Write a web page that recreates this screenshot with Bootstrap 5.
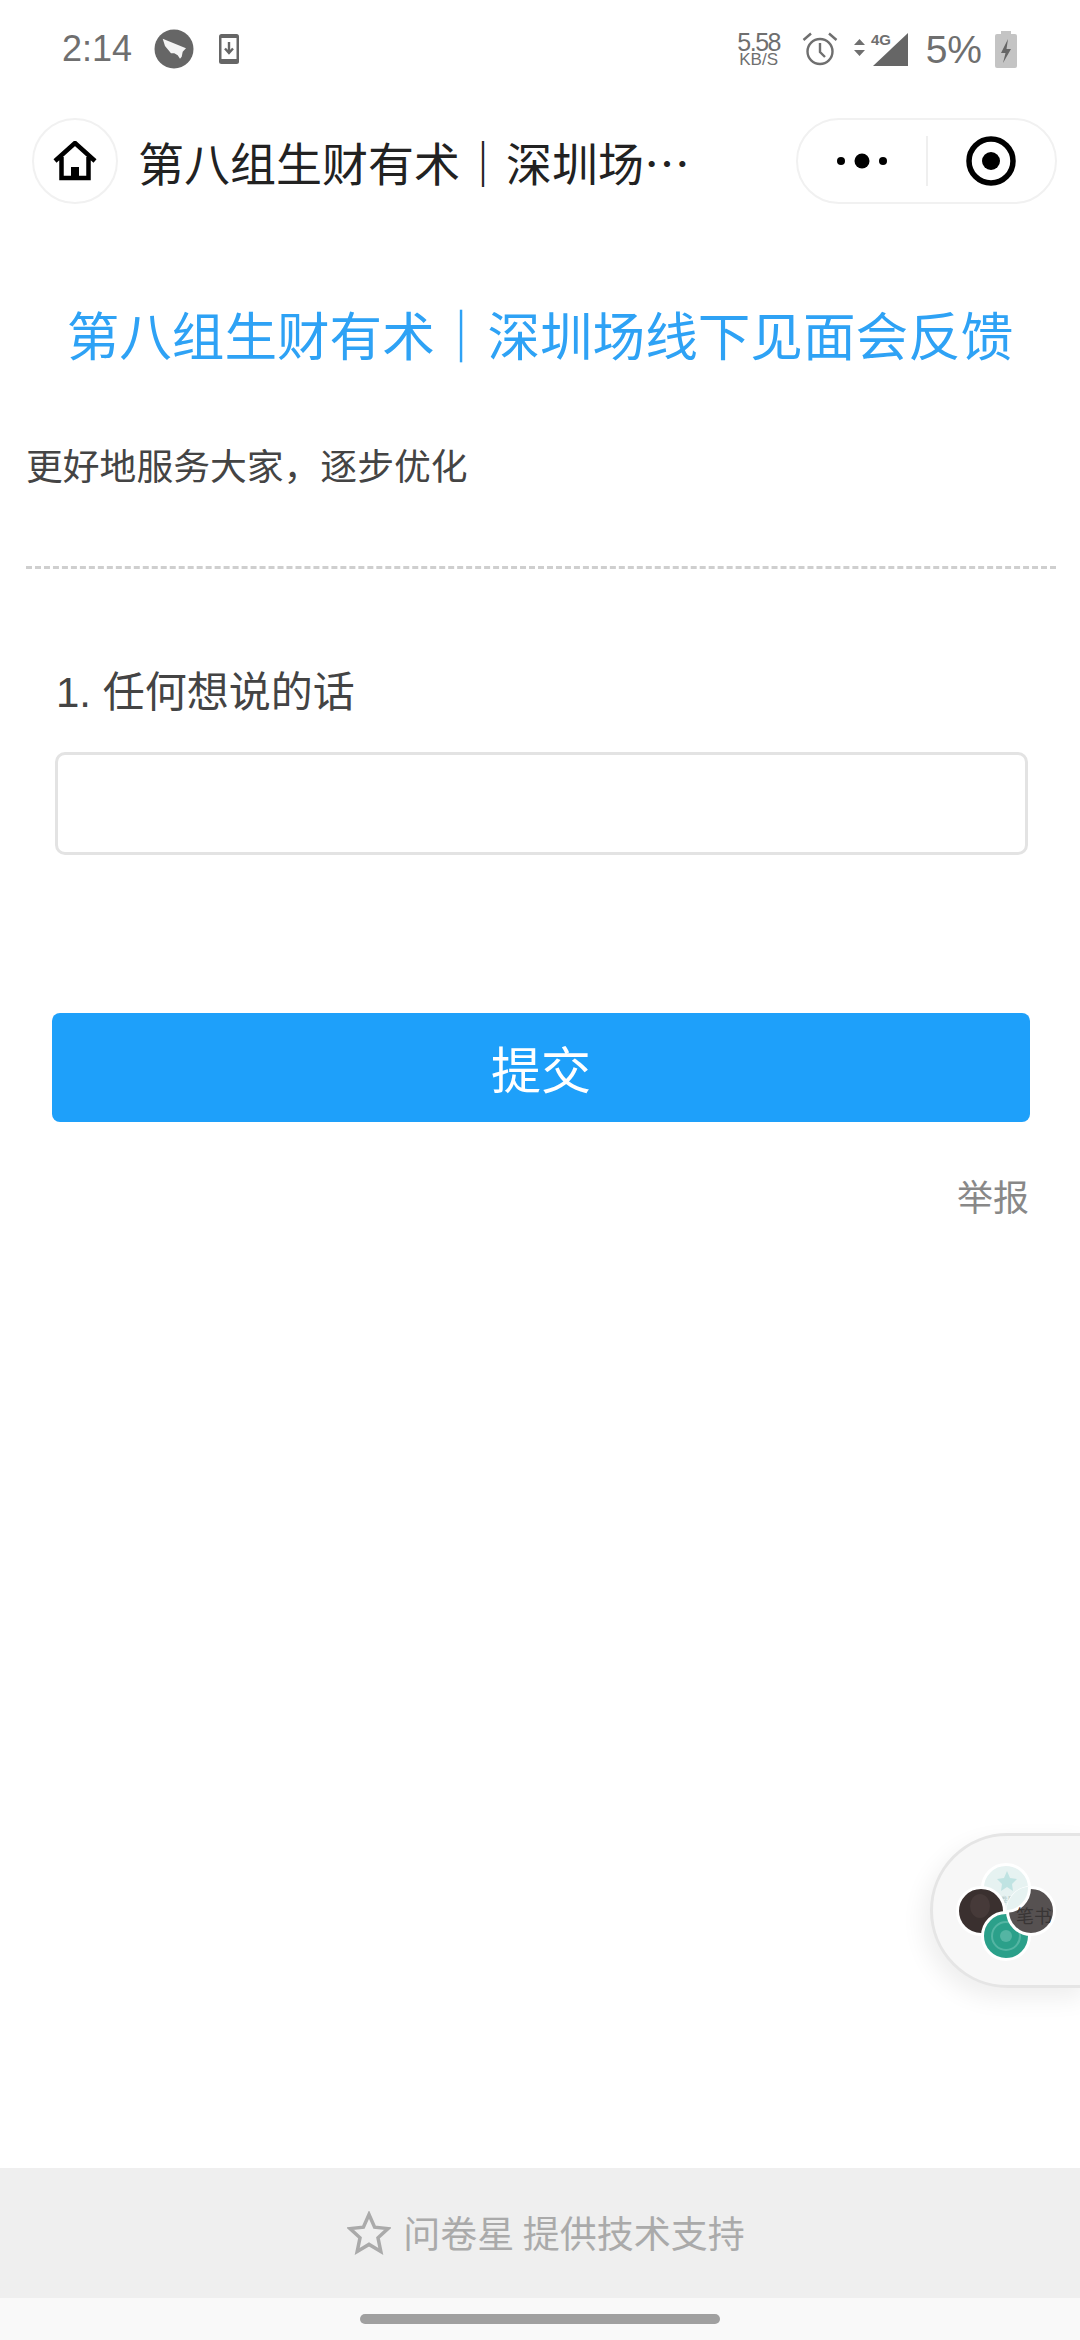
<!DOCTYPE html>
<html lang="zh-CN">
<head>
  <meta charset="UTF-8">
  <title>第八组生财有术｜深圳场线下见面会反馈</title>
  <link href="https://cdn.jsdelivr.net/npm/bootstrap@5.3.0/dist/css/bootstrap.min.css" rel="stylesheet">
  <style>
    html, body { height: 2340px; }
    body { font-family: "Noto Sans CJK SC", "Liberation Sans", sans-serif; overflow: hidden; background: #fff; position: relative; }
    .status-row { height: 98px; padding: 0 63px 0 62px; color: #6f6f6f; font-family: "Liberation Sans", sans-serif; }
    .status-time { font-size: 36px; line-height: 1; margin-right: 22px; }
    .wing-icon { margin-right: 25px; }
    .speed-box { width: 46px; margin-right: 20px; text-align: center; }
    .speed-num { font-size: 25px; line-height: 20px; letter-spacing: -1.5px; }
    .speed-unit { font-size: 17px; line-height: 15px; }
    .signal-icon { margin-left: 16px; }
    .batt-text { font-size: 39px; line-height: 1; margin: 0 13px 0 16px; }
    .nav-row { height: 88px; margin-top: 19px; padding: 0 23px 0 32px; }
    .home-btn { width: 86px; height: 86px; border: 2px solid #f1f1f1; border-radius: 50%; flex: none; }
    .nav-title { margin-left: 20px; font-size: 46px; line-height: 60px; color: #222; white-space: nowrap; }
    .bar-mark { font-weight: 700; }
    .capsule { width: 261px; height: 86px; margin-left: auto; border: 2px solid #f1f1f1; border-radius: 43px; }
    .capsule-side { height: 100%; width: 50%; }
    .capsule-line { width: 2px; height: 50px; background: #efefef; flex: none; }
    .survey-title { margin: 90px 0 0; font-size: 52.6px; line-height: 76px; font-weight: 400; color: #2ea2f5; text-align: center; white-space: nowrap; }
    .survey-desc { margin: 68px 0 0 26px; font-size: 36.8px; line-height: 50px; color: #444; }
    .dash-line { margin: 77px 24px 0 26px; border-top: 3px dashed #cfcfcf; }
    .question-label { margin: 94px 0 0 56px; font-size: 42px; line-height: 60px; color: #444; font-family: "Liberation Sans", "Noto Sans CJK SC", sans-serif; }
    .question-box { display: block; width: 973px; height: 103px; margin: 29px 0 0 55px; border: 3px solid #e3e3e3; border-radius: 10px; box-shadow: none; }
    .submit-btn { display: block; width: 978px; height: 109px; margin: 158px 0 0 52px; padding: 0; font-size: 50px; border: 0; border-radius: 8px; background: #1ea0fa; color: #fff; }
    .report-link { margin: 48px 51px 0 0; font-size: 36px; line-height: 50px; color: #888; text-align: right; }
    .brand-bar { height: 130px; padding-left: 12px; background: #efefef; color: #aaa; font-size: 37px; }
    .brand-star { margin-right: 12px; }
    .gesture-bar { height: 42px; background: #f9f9f9; }
    .gesture-pill { width: 360px; height: 10px; background: #a0a0a0; border-radius: 5px; }
    .float-chip { position: absolute; left: 930px; top: 1833px; width: 160px; height: 155px; background: #f7f7f7; border: 3px solid #e5e5e5; border-radius: 78px 0 0 78px; box-shadow: -6px 10px 24px rgba(0,0,0,.07); }
    .chip-discs { margin-left: 18px; }
  </style>
</head>
<body class="d-flex flex-column">
  <div class="status-row d-flex align-items-center">
    <span class="status-time">2:14</span>
    <svg width="40" height="40" viewBox="0 0 40 40" class="wing-icon">
      <circle cx="20" cy="20" r="19.5" fill="#666"/>
      <path d="M8.7 9.7 L32 19.3 L28.7 22.7 L27.7 27.7 L26 29.7 L23.7 26.3 L20.3 24.3 L17 24.3 L13.7 20.3 L11 17 Z" fill="#f4f4f4"/>
    </svg>
    <svg width="20" height="30" viewBox="0 0 20 30">
      <rect x="0" y="0" width="20" height="30" rx="2.5" fill="#666"/>
      <rect x="2.5" y="4" width="15" height="21" fill="#fff"/>
      <path d="M10 8 V18 M6 14.5 L10 19 L14 14.5" fill="none" stroke="#666" stroke-width="2.4"/>
    </svg>
    <div class="ms-auto d-flex align-items-center">
      <div class="speed-box">
        <div class="speed-num">5.58</div>
        <div class="speed-unit">KB/S</div>
      </div>
      <svg width="36" height="36" viewBox="0 0 36 36">
        <circle cx="18" cy="20.5" r="12.5" fill="none" stroke="#6f6f6f" stroke-width="2.4"/>
        <path d="M18 12 V21 L23 26 M1.5 9 L9 2.5 M34.5 9 L27 2.5" fill="none" stroke="#6f6f6f" stroke-width="2.4"/>
      </svg>
      <svg width="56" height="36" viewBox="0 0 56 36" class="signal-icon">
        <path d="M0 14 L5.5 8 L11 14 Z M0 19 L11 19 L5.5 25 Z" fill="#6f6f6f"/>
        <path d="M19 35 L54 2 V35 Z" fill="#666"/>
        <text x="17" y="14" font-size="15" font-weight="700" fill="#6f6f6f" font-family="Liberation Sans, sans-serif">4G</text>
      </svg>
      <span class="batt-text">5%</span>
      <svg width="22" height="37" viewBox="0 0 22 37">
        <rect x="6" y="0" width="10" height="4" fill="#c4c4c4"/>
        <rect x="0" y="3" width="22" height="34" rx="2" fill="#c4c4c4"/>
        <path d="M13 8 L6 22 H10.5 L8 32 L16 18 H11.5 Z" fill="#666"/>
      </svg>
    </div>
  </div>

  <div class="nav-row d-flex align-items-center">
    <div class="home-btn d-flex align-items-center justify-content-center">
      <svg width="44" height="40" viewBox="0 0 44 40">
        <path d="M2 20 L22 2 L42 20 M8.5 16 V37 H35.5 V16" fill="none" stroke="#000" stroke-width="4.5" stroke-linejoin="miter"/>
        <rect x="18" y="26" width="8" height="11" fill="#000"/>
      </svg>
    </div>
    <div class="nav-title">第八组生财有术<span class="bar-mark">｜</span>深圳场…</div>
    <div class="capsule d-flex align-items-center">
      <div class="capsule-side d-flex align-items-center justify-content-center">
        <svg width="52" height="18" viewBox="0 0 52 18">
          <circle cx="5" cy="9" r="4" fill="#000"/><circle cx="26" cy="9" r="7.5" fill="#000"/><circle cx="47" cy="9" r="4" fill="#000"/>
        </svg>
      </div>
      <div class="capsule-line"></div>
      <div class="capsule-side d-flex align-items-center justify-content-center">
        <svg width="50" height="50" viewBox="0 0 50 50">
          <circle cx="25" cy="25" r="22" fill="none" stroke="#000" stroke-width="5.5"/><circle cx="25" cy="25" r="9" fill="#000"/>
        </svg>
      </div>
    </div>
  </div>

  <h1 class="survey-title">第八组生财有术<span class="bar-mark">｜</span>深圳场线下见面会反馈</h1>
  <p class="survey-desc">更好地服务大家，逐步优化</p>
  <div class="dash-line"></div>

  <div class="question-label">1. 任何想说的话</div>
  <input type="text" class="form-control question-box" aria-label="任何想说的话">
  <button type="button" class="btn submit-btn">提交</button>
  <div class="report-link">举报</div>

  <div class="brand-bar mt-auto d-flex align-items-center justify-content-center">
    <svg width="44" height="44" viewBox="0 0 44 44" class="brand-star">
      <path d="M22 3.5 L27.6 16.2 L41 17.6 L31 26.8 L33.8 40.4 L22 33.4 L10.2 40.4 L13 26.8 L3 17.6 L16.4 16.2 Z" fill="none" stroke="#aaa" stroke-width="3.5"/>
    </svg>
    <span>问卷星 提供技术支持</span>
  </div>
  <div class="gesture-bar d-flex align-items-center justify-content-center">
    <div class="gesture-pill"></div>
  </div>

  <!-- pinwheel of avatars: top over right, right over bottom, bottom over left, left over top -->
  <div class="float-chip d-flex align-items-center">
    <svg width="110" height="110" viewBox="0 0 110 110" class="chip-discs">
      <defs>
        <clipPath id="rightDisc"><circle cx="80" cy="55" r="24.5"/></clipPath>
      </defs>
      <g id="topDisc">
        <circle cx="55" cy="32" r="23.5" fill="#e6f2f1" stroke="#fff" stroke-width="3"/>
        <path d="M56 15 L59 22 L66 23 L61 28 L62 35 L56 31 L50 35 L51 28 L46 23 L53 22 Z" fill="#bfe3e2"/>
      </g>
      <text x="53" y="46" font-size="7" text-anchor="middle" fill="#b5c9c8">问卷星</text>
      <circle cx="30" cy="55" r="23.5" fill="#3a302f" stroke="#fff" stroke-width="3"/>
      <ellipse cx="29" cy="50" rx="10" ry="12" fill="#463a39"/>
      <circle cx="55" cy="80" r="23.5" fill="#2ba08a" stroke="#fff" stroke-width="3"/>
      <circle cx="55" cy="80" r="14" fill="none" stroke="#54b5a3" stroke-width="2"/>
      <circle cx="55" cy="80" r="6" fill="#54b5a3"/>
      <circle cx="80" cy="55" r="23.5" fill="#565151" stroke="#fff" stroke-width="3"/>
      <use href="#topDisc" clip-path="url(#rightDisc)"/>
      <text x="83" y="67" font-size="18" text-anchor="middle" fill="#393535">笔书</text>
    </svg>
  </div>

  <script src="https://cdn.jsdelivr.net/npm/bootstrap@5.3.0/dist/js/bootstrap.bundle.min.js"></script>
</body>
</html>
